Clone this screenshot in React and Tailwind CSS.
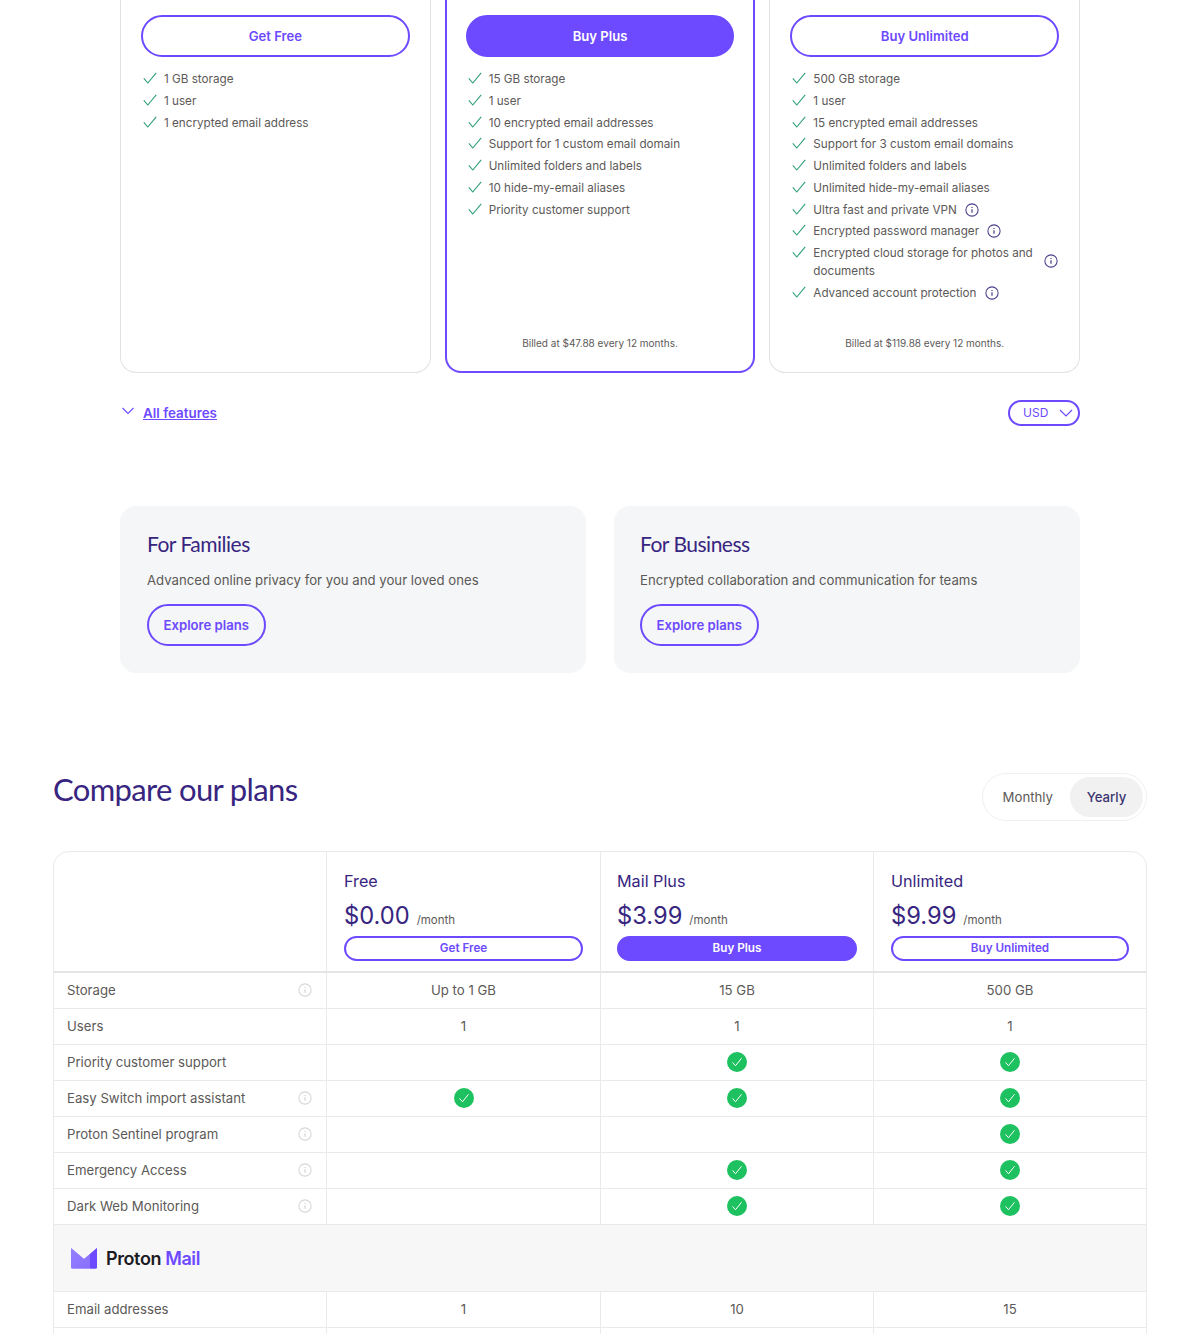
import React from 'react';

const FONT = "font-['Inter','Liberation_Sans',sans-serif]";
const HEAD = "font-['Lato','Liberation_Sans',sans-serif]";

const Check = () => (
  <svg viewBox="0 0 16 16" className="w-4 h-4 -mt-px shrink-0 text-[#2d9d78]" fill="none" stroke="currentColor" strokeWidth="1.1">
    <path d="M1.8 8.3 L5.8 13 L14.2 2.8" />
  </svg>
);

const Info = ({ muted }) => (
  <svg viewBox="0 0 16 16" className={`w-[14px] h-[14px] shrink-0 ${muted ? '-mt-px text-[#d6d6d6]' : 'text-[#4a3f8c]'}`} fill="none" stroke="currentColor" strokeWidth="1.2">
    <circle cx="8" cy="8" r="7" />
    <path d="M8 7.2 V11.2" strokeWidth="1.4" />
    <path d="M8 4.6 V5.8" strokeWidth="1.4" />
  </svg>
);

const GreenCheck = () => (
  <div className="w-5 h-5 -mt-px rounded-full bg-[#1ec15f] flex items-center justify-center">
    <svg viewBox="0 0 16 16" className="w-3 h-3" fill="none" stroke="#fff" strokeWidth="1.3">
      <path d="M2 8.5 L6 13 L14 3" />
    </svg>
  </div>
);

const PlanCard = ({ label, primary, features, billed }) => (
  <div className={`flex-1 h-[373px] flex flex-col rounded-b-2xl ${primary ? 'border-2 border-t-0 border-[#6d4aff] px-[19px]' : 'border border-t-0 border-[#e2e2e2] px-5'}`}>
    <button className={`mt-[15px] h-[42px] w-full shrink-0 pt-px rounded-full border-2 border-[#6d4aff] text-[13.1px] font-semibold ${primary ? 'bg-[#6d4aff] text-white' : 'text-[#6d4aff]'}`}>
      {label}
    </button>
    <ul className="mt-3 flex flex-col">
      {features.map((f) => (
        <li key={f.text} className="flex items-start py-[2px] pl-[1px] text-[11.7px] leading-[17.75px] text-[#5c5958]">
          <Check />
          <span className={`ml-[6px] ${f.wrap ? 'w-[224px]' : ''}`}>{f.text}</span>
          {f.info && <span className={`${f.wrap ? 'ml-[7px] mt-[9px]' : 'ml-2 mt-px'}`}><Info /></span>}
        </li>
      ))}
    </ul>
    {billed && <p className={`mt-auto text-center text-[10px] leading-4 text-[#5c5958] ${primary ? 'mb-5' : 'mb-[21px]'}`}>{billed}</p>}
  </div>
);

const Promo = ({ title, text, inset }) => (
  <div className={`h-[167px] rounded-2xl bg-[#f4f6f7] pt-[23px] ${inset}`}>
    <h3 className={`${HEAD} text-[21px] tracking-[-0.5px] leading-[30px] text-[#372580]`}>{title}</h3>
    <p className="mt-[11px] text-[13.2px] leading-5 text-[#5c5958]">{text}</p>
    <button className="mt-[14px] h-[42px] px-[14.5px] pt-px rounded-full border-2 border-[#6d4aff] text-[13.15px] font-semibold text-[#6d4aff]">
      Explore plans
    </button>
  </div>
);

const PriceCol = ({ name, price, label, primary, last, inset, btn }) => (
  <div className={`pt-[19px] ${inset} ${last ? '' : 'border-r border-[#eaeaea]'}`}>
    <div className="text-[16.2px] leading-5 text-[#372580]">{name}</div>
    <div className="mt-[10px] flex items-baseline h-[30px] text-[#372580]">
      <span className="text-[23.7px] leading-[30px]">{price}</span>
      <span className="ml-[7px] text-[11.5px] text-[#5c5958]">/month</span>
    </div>
    <button className={`mt-[5px] h-[25px] pt-px rounded-full border-2 border-[#6d4aff] text-[11.7px] font-semibold ${btn} ${primary ? 'bg-[#6d4aff] text-white' : 'text-[#6d4aff]'}`}>
      {label}
    </button>
  </div>
);

const Row = ({ name, info, cells }) => (
  <div className="grid grid-cols-[273px_274px_273px_1fr] h-9 border-b border-[#eaeaea] text-[13.2px] text-[#5c5958]">
    <div className="flex items-center justify-between pl-[13px] pr-[14px] border-r border-[#eaeaea]">
      <span>{name}</span>
      {info && <Info muted />}
    </div>
    {cells.map((c, i) => (
      <div key={i} className={`flex items-center justify-center ${i < 2 ? 'border-r border-[#eaeaea]' : ''}`}>
        {c === true ? <GreenCheck /> : c}
      </div>
    ))}
  </div>
);

const MailLogo = () => (
  <svg viewBox="0 0 28 22" className="w-[28px] h-[22px]">
    <defs>
      <linearGradient id="mailBack" x1="0" y1="0" x2="1" y2="1">
        <stop offset="0" stopColor="#a995ff" />
        <stop offset="1" stopColor="#6d4aff" />
      </linearGradient>
    </defs>
    <path d="M1 1 L14 12 L27 1 V20 a1.5 1.5 0 0 1 -1.5 1.5 H2.5 A1.5 1.5 0 0 1 1 20 Z" fill="url(#mailBack)" />
    <path d="M1 1 L14 12 L20 7 V21.5 H2.5 A1.5 1.5 0 0 1 1 20 Z" fill="#8f78ff" opacity="0.75" />
    <path d="M20 7 L27 1 V20 a1.5 1.5 0 0 1 -1.5 1.5 H20 Z" fill="#6d4aff" />
  </svg>
);

const rows = [
  { name: 'Storage', info: true, cells: ['Up to 1 GB', '15 GB', '500 GB'] },
  { name: 'Users', cells: ['1', '1', '1'] },
  { name: 'Priority customer support', cells: ['', true, true] },
  { name: 'Easy Switch import assistant', info: true, cells: [true, true, true] },
  { name: 'Proton Sentinel program', info: true, cells: ['', '', true] },
  { name: 'Emergency Access', info: true, cells: ['', true, true] },
  { name: 'Dark Web Monitoring', info: true, cells: ['', true, true] },
];

const t = (text, extra) => ({ text, ...extra });

export default function App() {
  return (
    <div className={`${FONT} h-[1334px] overflow-hidden bg-white`}>
      <div className="px-[120px] flex gap-[14px]">
        <PlanCard
          label="Get Free"
          features={[t('1 GB storage'), t('1 user'), t('1 encrypted email address')]}
        />
        <PlanCard
          primary
          label="Buy Plus"
          billed="Billed at $47.88 every 12 months."
          features={[
            t('15 GB storage'),
            t('1 user'),
            t('10 encrypted email addresses'),
            t('Support for 1 custom email domain'),
            t('Unlimited folders and labels'),
            t('10 hide-my-email aliases'),
            t('Priority customer support'),
          ]}
        />
        <PlanCard
          label="Buy Unlimited"
          billed="Billed at $119.88 every 12 months."
          features={[
            t('500 GB storage'),
            t('1 user'),
            t('15 encrypted email addresses'),
            t('Support for 3 custom email domains'),
            t('Unlimited folders and labels'),
            t('Unlimited hide-my-email aliases'),
            t('Ultra fast and private VPN', { info: true }),
            t('Encrypted password manager', { info: true }),
            t('Encrypted cloud storage for photos and documents', { info: true, wrap: true }),
            t('Advanced account protection', { info: true }),
          ]}
        />
      </div>

      <div className="px-[120px] mt-[27px] h-[26px] flex items-center justify-between">
        <div className="flex items-center gap-2 text-[#6d4aff]">
          <svg viewBox="0 0 14 8" className="ml-px w-[14px] h-2 -mt-1" fill="none" stroke="currentColor" strokeWidth="1.1">
            <path d="M1.5 1 L7 6.5 L12.5 1" />
          </svg>
          <a className="mt-px text-[13.4px] font-semibold underline">All features</a>
        </div>
        <div className="w-[72px] h-[26px] rounded-full border-2 border-[#6d4aff] flex items-center justify-between pl-[13px] pr-[5px] text-[12px] text-[#6d4aff]">
          USD
          <svg viewBox="0 0 14 8" className="w-[14px] h-2" fill="none" stroke="currentColor" strokeWidth="1.2">
            <path d="M1 1 L7 7 L13 1" />
          </svg>
        </div>
      </div>

      <div className="px-[120px] mt-[80px] grid grid-cols-2 gap-7">
        <Promo inset="px-[27px]" title="For Families" text="Advanced online privacy for you and your loved ones" />
        <Promo inset="px-[26px]" title="For Business" text="Encrypted collaboration and communication for teams" />
      </div>

      <div className="px-[53px] mt-[100px] flex items-start justify-between h-[50px]">
        <h2 className={`${HEAD} -mt-[2px] text-[31px] tracking-[-0.65px] leading-9 text-[#372580]`}>Compare our plans</h2>
        <div className="h-[48px] w-[165px] rounded-full border border-[#f0f0f0] flex items-center justify-end pr-[3px] text-[13.2px]">
          <span className="mt-[2px] mr-[17px] text-[#5c5958]">Monthly</span>
          <span className="h-[40px] w-[73px] pt-[2px] rounded-full bg-[#f1f1f1] flex items-center justify-center font-medium text-[#3b3470]">Yearly</span>
        </div>
      </div>

      <div className="mx-[53px] mt-[28px] border border-[#eaeaea] rounded-t-2xl">
        <div className="grid grid-cols-[273px_274px_273px_1fr] h-[121px] border-b-2 border-[#e5e5e5]">
          <div className="border-r border-[#eaeaea]" />
          <PriceCol name="Free" price="$0.00" label="Get Free" inset="pl-[17px]" btn="w-[239px]" />
          <PriceCol name="Mail Plus" price="$3.99" label="Buy Plus" primary inset="pl-4" btn="w-[240px]" />
          <PriceCol name="Unlimited" price="$9.99" label="Buy Unlimited" last inset="pl-[17px]" btn="w-[238px]" />
        </div>
        {rows.map((r) => <Row key={r.name} {...r} />)}
        <div className="h-[67px] bg-[#f7f7f7] border-b border-[#eaeaea] flex items-center pl-4 gap-2">
          <MailLogo />
          <span className="text-[18px] font-semibold tracking-[-0.4px] text-[#1c1b24]">Proton <span className="text-[#6d4aff]">Mail</span></span>
        </div>
        <Row name="Email addresses" cells={['1', '10', '15']} />
        <Row name="" cells={['', '', '']} />
      </div>
    </div>
  );
}
